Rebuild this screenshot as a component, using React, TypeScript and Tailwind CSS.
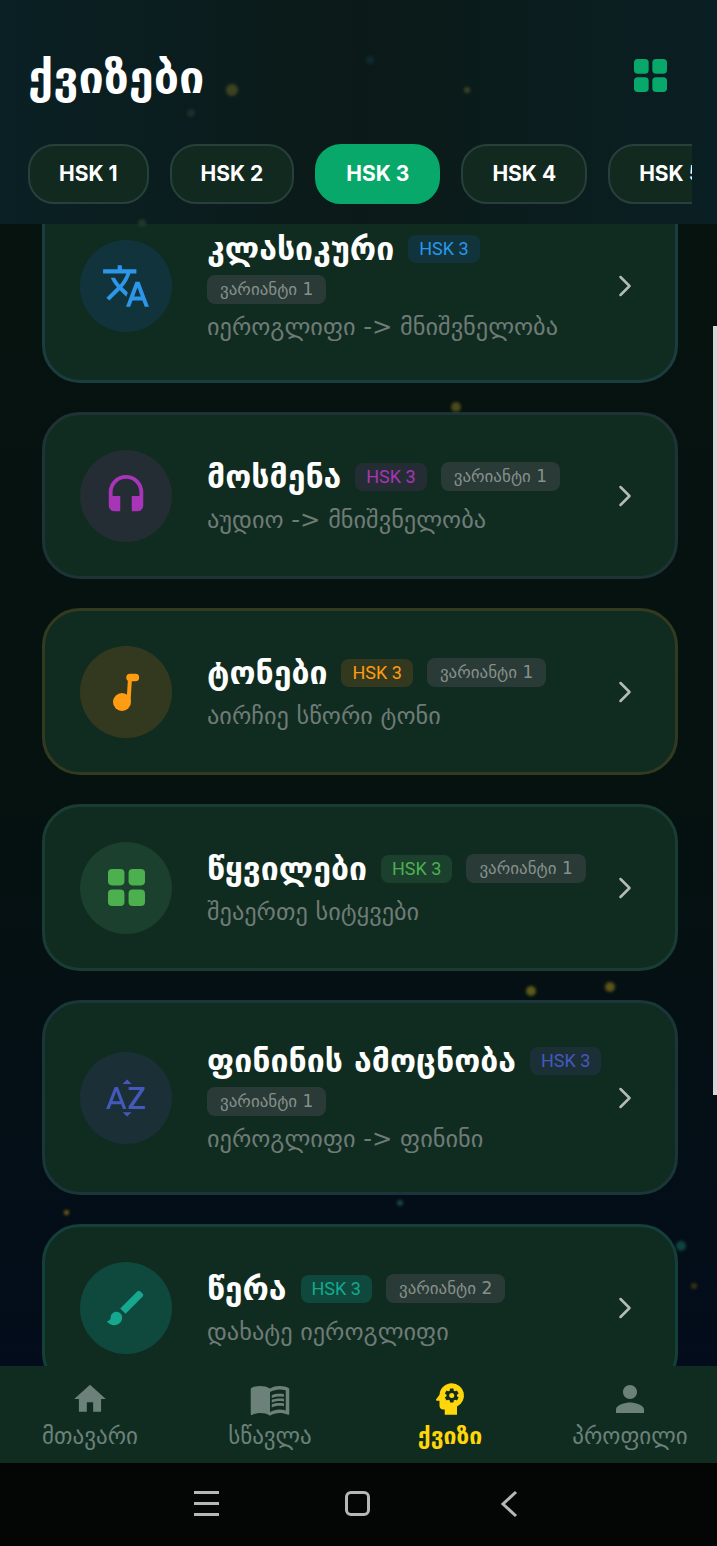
import { ReactNode } from "react";
import { ChevronRight } from "lucide-react";
import {
  MdBrush,
  MdHeadset,
  MdHome,
  MdMenuBook,
  MdPerson,
  MdPsychology,
  MdSortByAlpha,
  MdTranslate,
} from "react-icons/md";

const font = "font-['DejaVu_Sans','Noto_Sans',sans-serif]";

function GridIcon({ className }: { className: string }) {
  return (
    <svg viewBox="0 0 36 36" className={className} fill="currentColor">
      <rect x="0" y="0" width="16" height="16" rx="4" />
      <rect x="20" y="0" width="16" height="16" rx="4" />
      <rect x="0" y="20" width="16" height="16" rx="4" />
      <rect x="20" y="20" width="16" height="16" rx="4" />
    </svg>
  );
}

function NoteIcon({ className }: { className: string }) {
  return (
    <svg viewBox="0 0 26 38" className={className} fill="currentColor">
      <circle cx="9" cy="29" r="9" />
      <path d="M15.5 29 17 5" fill="none" stroke="currentColor" strokeWidth="4" />
      <path d="M17 4.5h5.5" fill="none" stroke="currentColor" strokeWidth="7.5" strokeLinecap="round" />
    </svg>
  );
}

const levels = ["HSK 1", "HSK 2", "HSK 3", "HSK 4", "HSK 5"];

const particles = [
  { x: 232, y: 90, s: 12, c: "#3d4420" },
  { x: 467, y: 90, s: 6, c: "#3d4420" },
  { x: 191, y: 113, s: 8, c: "#1a3029" },
  { x: 142, y: 223, s: 8, c: "#1d3a2a" },
  { x: 456, y: 407, s: 10, c: "#4a4a1c" },
  { x: 531, y: 991, s: 10, c: "#5c5a18" },
  { x: 610, y: 987, s: 10, c: "#5e5418" },
  { x: 400, y: 1203, s: 6, c: "#164a3c" },
  { x: 66, y: 1212, s: 5, c: "#7a5e18" },
  { x: 681, y: 1246, s: 10, c: "#104640" },
  { x: 694, y: 1286, s: 6, c: "#3d3218" },
  { x: 370, y: 60, s: 8, c: "#0f2a30" },
];

type Quiz = {
  title: string;
  sub: string;
  variant: string;
  icon: ReactNode;
  circle: string;
  badge: string;
  border: string;
  wrap?: boolean;
};

const quizzes: Quiz[] = [
  {
    title: "კლასიკური",
    sub: "იეროგლიფი -> მნიშვნელობა",
    variant: "ვარიანტი 1",
    icon: <MdTranslate className="h-[50px] w-[50px] text-[#2b96ea]" />,
    circle: "bg-[#11343c]",
    badge: "bg-[#11343c] text-[#2b96ea]",
    border: "border-[#1a3d40]",
    wrap: true,
  },
  {
    title: "მოსმენა",
    sub: "აუდიო -> მნიშვნელობა",
    variant: "ვარიანტი 1",
    icon: <MdHeadset className="h-[46px] w-[46px] text-[#a834b8]" />,
    circle: "bg-[#242d34]",
    badge: "bg-[#242d34] text-[#a834b8]",
    border: "border-[#1f3337]",
  },
  {
    title: "ტონები",
    sub: "აირჩიე სწორი ტონი",
    variant: "ვარიანტი 1",
    icon: <NoteIcon className="h-[38px] w-[26px] text-[#ff9c12]" />,
    circle: "bg-[#33391f]",
    badge: "bg-[#33391f] text-[#ff9c12]",
    border: "border-[#323b20]",
  },
  {
    title: "წყვილები",
    sub: "შეაერთე სიტყვები",
    variant: "ვარიანტი 1",
    icon: <GridIcon className="h-[37px] w-[37px] text-[#4cb04f]" />,
    circle: "bg-[#1b402e]",
    badge: "bg-[#1b402e] text-[#4cb04f]",
    border: "border-[#193d33]",
  },
  {
    title: "ფინინის ამოცნობა",
    sub: "იეროგლიფი -> ფინინი",
    variant: "ვარიანტი 1",
    icon: <MdSortByAlpha className="h-[46px] w-[46px] text-[#4558bd]" />,
    circle: "bg-[#1a3036]",
    badge: "bg-[#1a3036] text-[#4558bd]",
    border: "border-[#1a3639]",
    wrap: true,
  },
  {
    title: "წერა",
    sub: "დახატე იეროგლიფი",
    variant: "ვარიანტი 2",
    icon: <MdBrush className="h-[46px] w-[46px] text-[#15a88f]" />,
    circle: "bg-[#0f483c]",
    badge: "bg-[#0f483c] text-[#15a88f]",
    border: "border-[#153f39]",
  },
];

function Variant({ text }: { text: string }) {
  return (
    <span className="inline-block rounded-lg bg-[#2a3a36] px-[13px] text-[17px] leading-[29px] text-[#85908b]">
      {text}
    </span>
  );
}

function QuizCard({ q }: { q: Quiz }) {
  return (
    <div
      className={`flex items-center rounded-[38px] border-[3px] bg-[#102c21] pl-[35px] pr-[32px] ${q.border} ${
        q.wrap ? "h-[195px]" : "h-[167px]"
      }`}
    >
      <div className={`flex h-[92px] w-[92px] shrink-0 items-center justify-center rounded-full ${q.circle}`}>
        {q.icon}
      </div>
      <div className="ml-[35px] flex min-w-0 flex-1 flex-col">
        <div className="flex flex-wrap items-center gap-x-[14px] gap-y-[6px]">
          <span className="text-[32px] font-bold leading-[40px] text-white">{q.title}</span>
          <span
            className={`rounded-lg px-[11px] font-['Roboto',sans-serif] text-[18px] leading-[28px] ${q.badge}`}
          >
            HSK 3
          </span>
          {q.wrap ? (
            <span className="basis-full leading-[29px]">
              <Variant text={q.variant} />
            </span>
          ) : (
            <Variant text={q.variant} />
          )}
        </div>
        <div className="mt-[8px] text-[24.3px] leading-[30px] text-[#6f7b76]">{q.sub}</div>
      </div>
      <ChevronRight className="h-[36px] w-[36px] shrink-0 text-[#b3bbb8]" strokeWidth={1.7} />
    </div>
  );
}

const nav = [
  { label: "მთავარი", icon: <MdHome className="h-[38px] w-[38px]" /> },
  { label: "სწავლა", icon: <MdMenuBook className="h-[42px] w-[42px]" /> },
  { label: "ქვიზი", icon: <MdPsychology className="h-[42px] w-[42px]" />, active: true },
  { label: "პროფილი", icon: <MdPerson className="h-[42px] w-[42px]" /> },
];

export default function App() {
  return (
    <div
      className={`relative flex h-[1546px] w-[717px] flex-col overflow-hidden bg-gradient-to-b from-[#06130f] via-[#06120f] to-[#030a1e] ${font}`}
    >
      {particles.map((p, i) => (
        <span
          key={i}
          className="absolute z-20 rounded-full blur-[1.5px]"
          style={{ left: p.x - p.s / 2, top: p.y - p.s / 2, width: p.s, height: p.s, background: p.c }}
        />
      ))}

      <header className="z-10 h-[224px] shrink-0 bg-gradient-to-r from-[#0a2024] via-[#0b1a18] to-[#0a1f23] pl-[28px] pr-[25px]">
        <div className="flex h-[144px] items-center justify-between pr-[25px] pt-[12px]">
          <h1 className="text-[45px] font-bold leading-[56px] text-white">ქვიზები</h1>
          <GridIcon className="-mt-[5px] h-[33px] w-[33px] text-[#08a86b]" />
        </div>
        <div className="flex gap-[21px] overflow-hidden">
          {levels.map((l) => (
            <div
              key={l}
              className={`flex h-[60px] shrink-0 items-center justify-center rounded-[26px] border-2 px-[29px] font-['Inter',sans-serif] text-[21px] font-bold text-white ${
                l === "HSK 3" ? "border-[#08a86b] bg-[#08a86b]" : "border-[#26403b] bg-[#12291f]"
              }`}
            >
              {l}
            </div>
          ))}
        </div>
      </header>

      <main className="relative min-h-0 flex-1 overflow-hidden">
        <div className="-mt-[36px] flex flex-col gap-[29px] pl-[42px] pr-[39px]">
          {quizzes.map((q) => (
            <QuizCard key={q.title} q={q} />
          ))}
        </div>
        <div className="absolute right-0 top-[102px] h-[769px] w-[4px] bg-[#d5d8d8]" />
      </main>

      <nav className="z-10 grid h-[97px] shrink-0 grid-cols-[repeat(4,180px)] bg-[#102c21]">
        {nav.map((n) => (
          <div
            key={n.label}
            className={`flex flex-col items-center pt-[10px] ${n.active ? "text-[#ffd60a]" : "text-[#6b8179]"}`}
          >
            <div className="flex h-[46px] items-center">{n.icon}</div>
            <span className={`text-[23px] leading-[28px] ${n.active ? "font-bold" : ""}`}>{n.label}</span>
          </div>
        ))}
      </nav>

      <div className="z-10 flex h-[83px] shrink-0 items-center justify-center gap-[126px] bg-[#030605] pb-[2px] pr-[6px] text-[#b6b8b7]">
        <div className="flex h-[25px] w-[25px] flex-col justify-between">
          <span className="h-[3px] bg-current" />
          <span className="h-[3px] bg-current" />
          <span className="h-[3px] bg-current" />
        </div>
        <div className="h-[25px] w-[25px] rounded-[6px] border-[3px] border-current" />
        <svg viewBox="0 0 18 28" className="ml-[4px] h-[28px] w-[18px]" fill="none" stroke="currentColor" strokeWidth="3">
          <path d="M16 2 3 14l13 12" />
        </svg>
      </div>
    </div>
  );
}
